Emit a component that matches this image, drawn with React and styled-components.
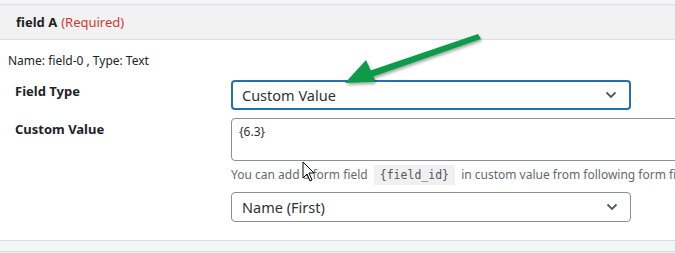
import React from 'react';
import styled, { createGlobalStyle } from 'styled-components';

const Global = createGlobalStyle`
  body {
    margin: 0;
    background: #fff;
    font-family: "Noto Sans", "Open Sans", sans-serif;
    color: #1d2327;
  }
`;

const Page = styled.div`
  position: relative;
  width: 675px;
  height: 253px;
  overflow: hidden;
  background: #f0f0f1;
`;

const Strip = styled.div`
  height: 4px;
  background: #f3f6f9;
  border-bottom: 1px solid #dcdcde;
`;

const Panel = styled.div`
  background: #fff;
  border-bottom: 1px solid #dcdcde;
`;

const PanelHeader = styled.div`
  height: 34px;
  display: flex;
  align-items: center;
  gap: 4px;
  padding-left: 16px;
  background: #f2f2f2;
  border-bottom: 1px solid #dcdcde;
  font-size: 13px;
  font-weight: 700;
`;

const Required = styled.span`
  color: #d63638;
  font-weight: 400;
`;

const PanelBody = styled.div`
  padding: 12px 0 18px 8px;
`;

const Meta = styled.div`
  font-size: 12px;
  line-height: 18px;
  margin-bottom: 10px;
`;

const Row = styled.div`
  display: grid;
  grid-template-columns: 223px 1fr;
  margin-bottom: ${(p) => p.gap || 0}px;
`;

const Label = styled.div`
  padding-left: 7px;
  padding-top: ${(p) => p.top || 0}px;
  font-size: 13px;
  font-weight: 700;
  line-height: 18px;
`;

const Control = styled.div`
  display: flex;
  flex-direction: column;
`;

const Select = styled.div`
  box-sizing: border-box;
  width: 400px;
  height: 30px;
  display: flex;
  align-items: center;
  justify-content: space-between;
  padding: 0 12px 0 10px;
  border: ${(p) => (p.focused ? '2px solid #2271b1' : '1px solid #8c8f94')};
  border-radius: 4px;
  background: #fff;
  font-size: 14.5px;
  color: #2c3338;
  ${(p) => (p.focused ? 'padding-left: 9px;' : '')}
`;

const TextArea = styled.div`
  box-sizing: border-box;
  width: 470px;
  height: 43px;
  padding: 5px 7px;
  border: 1px solid #8c8f94;
  border-radius: 4px;
  font-size: 12px;
  line-height: 16px;
  color: #2c3338;
`;

const Help = styled.p`
  margin: 4px 0 7px;
  font-size: 12px;
  line-height: 20px;
  color: #646970;
  white-space: nowrap;
`;

const Code = styled.code`
  display: inline-block;
  margin: 0 3px;
  padding: 0 6px;
  background: #f0f0f1;
  font-family: "DejaVu Sans Mono", monospace;
  font-size: 11.5px;
  line-height: 20px;
  color: #50575e;
`;

const NextStrip = styled.div`
  height: 10px;
  background: #f3f6f9;
  border-bottom: 1px solid #dcdcde;
`;

const Overlay = styled.svg`
  position: absolute;
  left: 0;
  top: 0;
  pointer-events: none;
`;

function Chevron() {
  return (
    <svg width="12" height="8" viewBox="0 0 12 8">
      <path d="M1.5 1.5 L6 6 L10.5 1.5" fill="none" stroke="#50575e" strokeWidth="1.8" />
    </svg>
  );
}

export default function App() {
  return (
    <Page>
      <Global />
      <Strip />
      <Panel>
        <PanelHeader>
          field A <Required>(Required)</Required>
        </PanelHeader>
        <PanelBody>
          <Meta>Name: field-0 , Type: Text</Meta>
          <Row gap={8}>
            <Label top={2}>Field Type</Label>
            <Control>
              <Select focused>
                Custom Value
                <Chevron />
              </Select>
            </Control>
          </Row>
          <Row>
            <Label top={2}>Custom Value</Label>
            <Control>
              <TextArea>{'{6.3}'}</TextArea>
              <Help>
                You can add a form field <Code>{'{field_id}'}</Code> in custom value from following form fields
              </Help>
              <Select>
                Name (First)
                <Chevron />
              </Select>
            </Control>
          </Row>
        </PanelBody>
      </Panel>
      <NextStrip />
      <Overlay width="675" height="253">
        <defs>
          <filter id="sh" x="-20%" y="-20%" width="140%" height="140%">
            <feDropShadow dx="1" dy="2" stdDeviation="1.5" floodColor="#000" floodOpacity="0.35" />
          </filter>
        </defs>
        <g filter="url(#sh)" fill="#0b9a48">
          <path d="M478 34 L481 39 L372 77 L366 72 Z" />
          <path d="M345 83 L366 60 L371 71 L375 80 L374 82 Z" />
        </g>
        <path
          d="M303 162 L303 178 L307 174 L310 181 L312 180 L309 173 L314 173 Z"
          fill="#fff"
          stroke="#000"
          strokeWidth="1"
        />
      </Overlay>
    </Page>
  );
}
